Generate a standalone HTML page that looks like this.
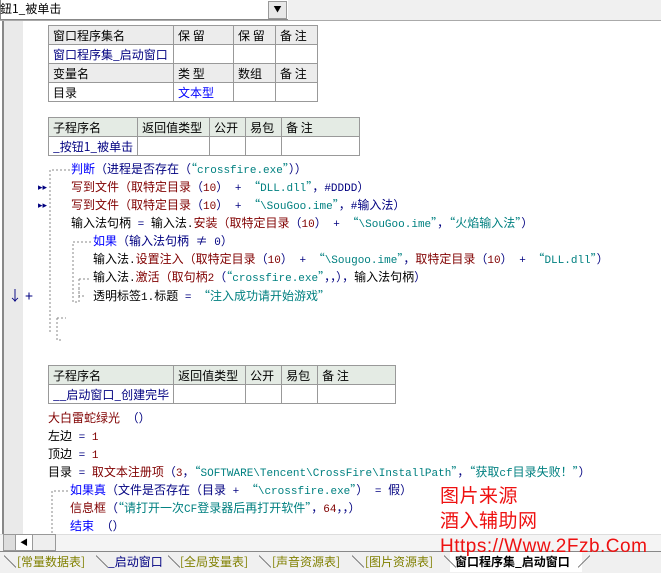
<html><head><style>
body{margin:0;width:661px;height:572px;overflow:hidden;background:#fff;position:relative;font-family:"WenQuanYi Zen Hei","Noto Sans CJK SC",sans-serif;font-size:12px}
.a{position:absolute;white-space:pre;line-height:18px}
table{position:absolute;border-collapse:collapse;font-size:12px}
td{border:1px solid #999;padding:0 4px;height:19px;white-space:nowrap}
.h td{background:#ececec}
.g td{background:#e4ebe4}
.bl{color:#0000ff}.nv{color:#000080}.dr{color:#800000}.tl{color:#008080}.k{color:#000}
.m{font-family:"Liberation Mono",monospace;font-size:11px}
.t{position:absolute;top:553px;line-height:18px;white-space:pre;color:#808000}
.s{position:absolute;top:553px;line-height:18px;color:#000}
</style></head><body>
<div style="position:absolute;left:0;top:0;width:287px;height:19px;border:1px solid #888;border-top:0;background:#fff"></div>
<div class="a" style="left:0;top:0;line-height:18px;font-size:12px">鈕1_被单击</div>
<div style="position:absolute;left:268px;top:1px;width:17px;height:16px;background:#e8e8e8;border:1px solid #999;text-align:center;font-size:8px;line-height:16px">▼</div>
<div style="position:absolute;left:288px;top:0;width:373px;height:20px;background:#f0f0f0"></div>
<div style="position:absolute;left:0;top:20px;width:661px;height:1px;background:#aaa"></div>
<div style="position:absolute;left:2px;top:21px;width:2px;height:513px;background:#888"></div>
<div style="position:absolute;left:4px;top:21px;width:19px;height:513px;background:#eaeaea"></div>

<table style="left:48px;top:25px"><tr class="h"><td style="width:116px">窗口程序集名</td><td style="width:51px">保 留</td><td style="width:33px">保 留</td><td style="width:33px">备 注</td></tr>
<tr><td class="nv">窗口程序集_启动窗口</td><td></td><td></td><td></td></tr>
<tr class="h"><td>变量名</td><td>类 型</td><td>数组</td><td>备 注</td></tr>
<tr><td>目录</td><td class="bl">文本型</td><td></td><td></td></tr></table>

<table style="left:48px;top:117px"><tr class="g"><td style="width:80px">子程序名</td><td style="width:63px">返回值类型</td><td style="width:27px">公开</td><td style="width:27px">易包</td><td style="width:69px">备 注</td></tr>
<tr><td class="nv">_按钮1_被单击</td><td></td><td></td><td></td><td></td></tr></table>

<svg style="position:absolute;left:0;top:155px" width="120" height="200" stroke="#888" fill="none" stroke-dasharray="2,2">
<path d="M70 15H50V178"/><path d="M57 163V185H63"/><path d="M57 163H66"/><path d="M91 87H73V147H79"/><path d="M79 124V141H85"/><path d="M79 124H91"/><path d="M79 133V149"/>
</svg>
<div class="a nv" style="left:38px;top:178px;font-size:9px">▸▸</div>
<div class="a nv" style="left:38px;top:196px;font-size:9px">▸▸</div>
<div class="a nv" style="left:8px;top:287px;font-size:14px">↓ +</div>

<div class="a" style="left:71px;top:160px"><span class="bl">判断</span><span class="nv">（进程是否存在（<span class="tl">“<span class="m">crossfire.exe</span>”</span>））</span></div>
<div class="a" style="left:71px;top:178px"><span class="dr">写到文件（取特定目录</span><span class="nv">（<span class="dr m">10</span>）<span class="m"> + </span><span class="tl">“<span class="m">DLL.dll</span>”</span>，<span class="m">#DDDD</span>）</span></div>
<div class="a" style="left:71px;top:196px"><span class="dr">写到文件（取特定目录</span><span class="nv">（<span class="dr m">10</span>）<span class="m"> + </span><span class="tl">“<span class="m">\SouGoo.ime</span>”</span>，<span class="m">#</span>输入法）</span></div>
<div class="a" style="left:71px;top:214px">输入法句柄<span class="nv m"> = </span>输入法<span class="m">.</span><span class="dr">安装（取特定目录</span><span class="nv">（<span class="dr m">10</span>）<span class="m"> + </span><span class="tl">“<span class="m">\SouGoo.ime</span>”</span>，<span class="tl">“火焰输入法”</span>）</span></div>
<div class="a" style="left:93px;top:232px"><span class="bl">如果</span><span class="nv">（输入法句柄<span class="m"> </span>≠<span class="m"> 0</span>）</span></div>
<div class="a" style="left:93px;top:250px">输入法<span class="m">.</span><span class="dr">设置注入（取特定目录</span><span class="nv">（<span class="dr m">10</span>）<span class="m"> + </span><span class="tl">“<span class="m">\Sougoo.ime</span>”</span>，<span class="dr">取特定目录</span>（<span class="dr m">10</span>）<span class="m"> + </span><span class="tl">“<span class="m">DLL.dll</span>”</span>）</span></div>
<div class="a" style="left:93px;top:268px">输入法<span class="m">.</span><span class="dr">激活（取句柄<span class="m">2</span></span><span class="nv">（<span class="tl">“<span class="m">crossfire.exe</span>”</span>，，），<span class="k">输入法句柄</span>）</span></div>
<div class="a" style="left:93px;top:287px">透明标签<span class="m">1.</span>标题<span class="nv m"> = </span><span class="tl">“注入成功请开始游戏”</span></div>

<table style="left:48px;top:365px"><tr class="g"><td style="width:116px">子程序名</td><td style="width:63px">返回值类型</td><td style="width:27px">公开</td><td style="width:27px">易包</td><td style="width:69px">备 注</td></tr>
<tr><td class="nv">__启动窗口_创建完毕</td><td></td><td></td><td></td><td></td></tr></table>

<div class="a dr" style="left:48px;top:409px">大白雷蛇绿光<span class="m"> </span><span class="nv">（）</span></div>
<div class="a" style="left:48px;top:427px">左边<span class="nv m"> = </span><span class="dr m">1</span></div>
<div class="a" style="left:48px;top:445px">顶边<span class="nv m"> = </span><span class="dr m">1</span></div>
<div class="a" style="left:48px;top:463px">目录<span class="nv m"> = </span><span class="dr">取文本注册项</span><span class="nv">（<span class="dr m">3</span>，<span class="tl">“<span class="m">SOFTWARE\Tencent\CrossFire\InstallPath</span>”</span>，<span class="tl">“获取<span class="m">cf</span>目录失败！”</span>）</span></div>
<svg style="position:absolute;left:0;top:480px" width="80" height="55" stroke="#888" fill="none" stroke-dasharray="2,2"><path d="M68 11H52V54"/></svg>
<div class="a" style="left:70px;top:481px"><span class="bl">如果真</span><span class="nv">（文件是否存在（目录<span class="m"> + </span><span class="tl">“<span class="m">\crossfire.exe</span>”</span>）<span class="m"> = </span>假）</span></div>
<div class="a" style="left:70px;top:499px"><span class="dr">信息框</span><span class="nv">（<span class="tl">“请打开一次<span class="m">CF</span>登录器后再打开软件”</span>，<span class="dr m">64</span>，，）</span></div>
<div class="a bl" style="left:70px;top:517px">结束<span class="m"> </span><span class="nv">（）</span></div>

<div style="position:absolute;left:0;top:534px;width:661px;height:16px;background:#f4f4f4;border-top:1px solid #ddd"></div>
<div style="position:absolute;left:3px;top:534px;width:12px;height:15px;background:#ddd;border:1px solid #999"></div>
<div style="position:absolute;left:15px;top:534px;width:16px;height:15px;background:#fff;border:1px solid #999;font-size:8px;text-align:center;line-height:15px">◀</div>
<div style="position:absolute;left:32px;top:534px;width:22px;height:15px;background:#eee;border:1px solid #999"></div>
<div style="position:absolute;left:0;top:551px;width:661px;height:21px;background:#f0f0f0;border-top:1px solid #888"></div>
<div style="position:absolute;left:450px;top:552px;width:132px;height:20px;background:#fff"></div>
<span class="s" style="left:4px">╲</span><span class="t" style="left:17px">[常量数据表]</span>
<span class="s" style="left:96px">╲</span><span class="t" style="left:108px;color:#000080">_启动窗口</span>
<span class="s" style="left:168px">╲</span><span class="t" style="left:180px">[全局变量表]</span>
<span class="s" style="left:259px">╲</span><span class="t" style="left:272px">[声音资源表]</span>
<span class="s" style="left:352px">╲</span><span class="t" style="left:365px">[图片资源表]</span>
<span class="s" style="left:444px">╲</span><span class="t" style="left:455px;font-weight:bold;color:#000">窗口程序集_启动窗口</span>
<span class="s" style="left:578px">╱</span>

<div class="a" style="left:440px;top:484px;color:#ee1111;font-size:19px;line-height:25px;z-index:5;font-family:'Liberation Sans','WenQuanYi Zen Hei',sans-serif;letter-spacing:0.5px">图片来源<br>酒入辅助网<br>Https://Www.2Fzb.Com</div>
</body></html>
